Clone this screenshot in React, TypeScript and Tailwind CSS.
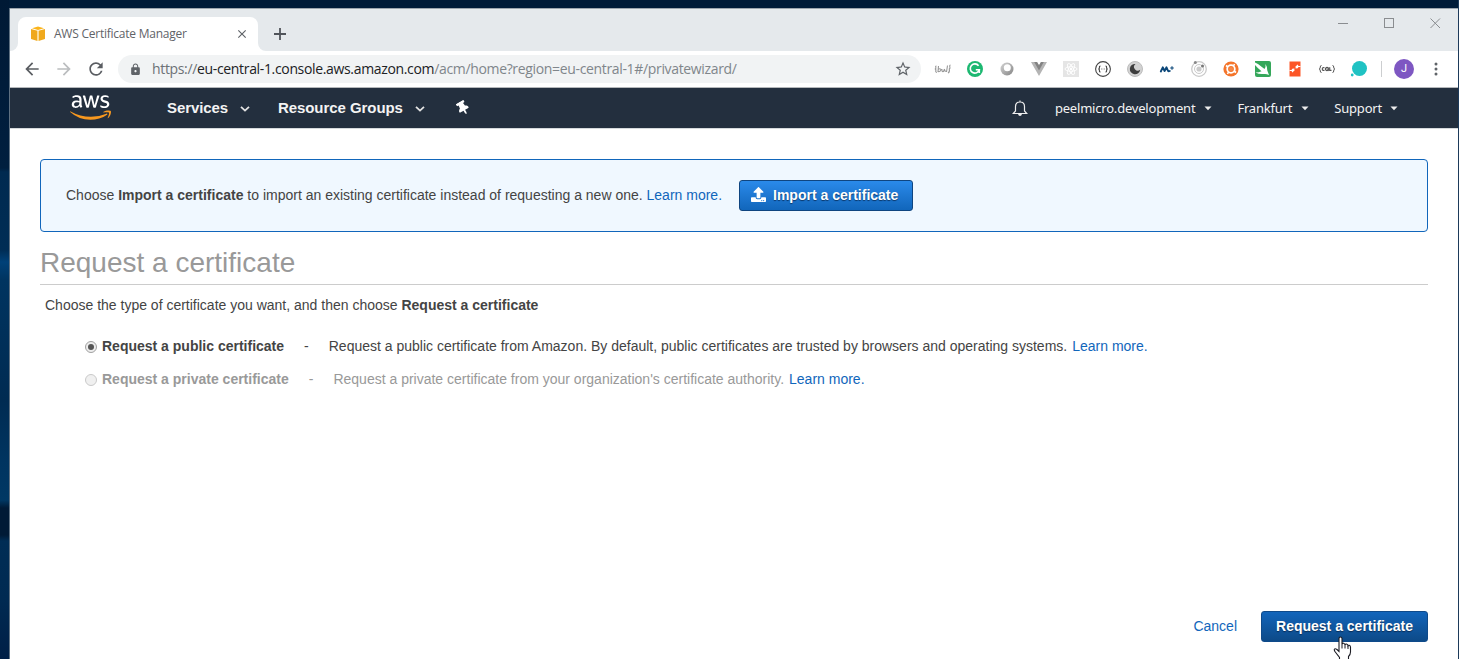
import React from "react";
import { MdArrowBack, MdArrowForward, MdRefresh, MdLock, MdStarBorder, MdClose } from "react-icons/md";
import { FaAws, FaThumbtack, FaUpload } from "react-icons/fa";

function Cube() {
  return (
    <svg viewBox="0 0 16 16" className="h-4 w-4">
      <path d="M8 0.5 14 2.2 8 4 2 2.2Z" fill="#fbb41a" />
      <path d="M1 3 7.500 4.800V15L1 13Z" fill="#f0a91d" />
      <path d="M15 3 8.500 4.800V15L15 13Z" fill="#f0a91d" />
      <path d="M7.500 4.800h1V15h-1Z" fill="#fde3a6" />
    </svg>
  );
}

function Extensions() {
  const cls = "h-4 w-4 overflow-visible";
  return (
    <div className="flex items-center gap-4">
      <svg viewBox="0 0 16 16" className={cls}>
        <g fill="none" stroke="#999" strokeWidth="1.100">
          <path d="M1.500 5Q0 5 1 7Q-.5 8 1 9Q0 11 2 11.500M15.500 4Q14.500 4 14.800 6Q15.500 7 14.300 8Q15 11 13 12" />
          <path d="M3.500 5 3 10.500Q5.500 11 6 8.500Q4.500 7 3.300 8.500M7 8Q6.500 11 8.500 10.500L9.500 8M12.500 4.500 11.500 11M9.500 8Q9.500 11 11.500 10" />
        </g>
      </svg>
      <svg viewBox="0 0 16 16" className={cls}>
        <circle cx="8" cy="8" r="8" fill="#1cb871" />
        <path d="M11.600 4.800A4.600 4.600 0 1 0 12.300 8.800H8.800M12.300 8.800V12" fill="none" stroke="#fff" strokeWidth="1.600" />
      </svg>
      <svg viewBox="0 0 16 16" className={cls}>
        <defs>
          <linearGradient id="ring" x1="0" y1="0" x2="1" y2="1">
            <stop offset="0" stopColor="#d4d4d4" />
            <stop offset="1" stopColor="#858585" />
          </linearGradient>
        </defs>
        <circle cx="8" cy="8" r="6.500" fill="url(#ring)" />
        <circle cx="8.300" cy="6.800" r="3.500" fill="#fff" />
      </svg>
      <svg viewBox="0 0 16 16" className={cls}>
        <path d="M0 1H6L8 4 10 1H16L8 15Z" fill="#b4b4b4" />
        <path d="M3.200 1H6L8 4.500 10 1H12.800L8 9.500Z" fill="#838383" />
      </svg>
      <svg viewBox="0 0 16 16" className={cls}>
        <rect width="16" height="16" fill="#e5e5e5" />
        <g fill="none" stroke="#fff" strokeWidth="0.900">
          <ellipse cx="8" cy="8" rx="6" ry="2.300" />
          <ellipse cx="8" cy="8" rx="6" ry="2.300" transform="rotate(60 8 8)" />
          <ellipse cx="8" cy="8" rx="6" ry="2.300" transform="rotate(120 8 8)" />
        </g>
        <circle cx="8" cy="8" r="1.300" fill="#fff" />
      </svg>
      <svg viewBox="0 0 16 16" className={cls}>
        <circle cx="8" cy="8" r="7.400" fill="#fff" stroke="#444" strokeWidth="1.100" />
        <path d="M5.500 5Q4.300 5 4.400 6.500Q4.500 8 3.300 8Q4.500 8 4.400 9.500Q4.300 11 5.500 11M10.500 5Q11.700 5 11.600 6.500Q11.500 8 12.700 8Q11.500 8 11.600 9.500Q11.700 11 10.500 11" fill="none" stroke="#444" strokeWidth="1.100" />
        <path d="M6.200 8h3.600" stroke="#777" strokeWidth="1" strokeDasharray="0.800 0.600" />
      </svg>
      <svg viewBox="0 0 16 16" className={cls}>
        <circle cx="8" cy="8" r="7.500" fill="#d2d2d2" stroke="#bdbdbd" />
        <path d="M8.500 2.900A5.200 5.200 0 1 0 13.200 8.800A3.700 3.700 0 0 1 8.500 2.900Z" fill="#3d3d3d" />
      </svg>
      <svg viewBox="0 0 16 16" className={cls}>
        <path d="M1.800 10.500 3.800 6.300 5.600 10 7.500 6.300 9 9.800Q9.500 10.700 10.800 10" fill="none" stroke="#0b4779" strokeWidth="1.900" strokeLinecap="round" strokeLinejoin="round" />
        <path d="M11.200 7h3.600M13 5.200v3.600" stroke="#0b4779" strokeWidth="1.100" />
      </svg>
      <svg viewBox="0 0 16 16" className={cls}>
        <g fill="none" stroke="#c9c9c9">
          <circle cx="8" cy="8" r="7.300" strokeWidth="1.300" />
          <circle cx="8" cy="8" r="4.500" strokeWidth="1" />
        </g>
        <circle cx="8" cy="8" r="2.600" fill="#cacaca" />
        <circle cx="4.300" cy="1.500" r="1.500" fill="#888" />
        <circle cx="11.500" cy="5" r="1.500" fill="#777" />
      </svg>
      <svg viewBox="0 0 16 16" className={cls}>
        <circle cx="8" cy="8" r="7.600" fill="#f4752b" />
        <circle cx="8" cy="8" r="3.800" fill="none" stroke="#fff" strokeWidth="1.800" />
        <path d="M3 4.500 5 6M11.500 3 10.500 5M13 11.500 11 10M4.500 13 5.500 11" stroke="#fff" strokeWidth="1.600" />
        <circle cx="8" cy="8" r="2" fill="#f58a4b" />
      </svg>
      <svg viewBox="0 0 16 16" className={cls}>
        <path d="M0 0H14Q16 0 16 2V14Q16 16 14 16H2Q0 16 0 14Z" fill="#35a75a" />
        <path d="M0 1.500 3 3 9.500 8Q11 6 10.500 3Q12.500 6 12.300 9.500L14 14Q11 12.500 9 13Q4 13.500 0.500 11.500Q4 11.500 6.500 10.300Q3 7.500 0 4Z" fill="#fff" />
      </svg>
      <svg viewBox="0 0 16 16" className={cls}>
        <path d="M2.500 0.500H13.500V15.500H2.500Z" fill="#fc5627" />
        <path d="M13.500 5.500H9.200V7.500M11 4 9.500 5.500 11 7M2.500 9.500H6.800V7.500M5 8 6.500 9.500 5 11" fill="none" stroke="#fff" strokeWidth="1.200" />
      </svg>
      <svg viewBox="0 0 16 16" className={cls}>
        <g fill="none" stroke="#555" strokeWidth="1">
          <path d="M2.500 4.500Q1.200 4.500 1.300 6Q1.300 8 .2 8Q1.300 8 1.300 10Q1.200 11.500 2.500 11.500M13.500 4.500Q14.800 4.500 14.700 6Q14.700 8 15.800 8Q14.700 8 14.700 10Q14.800 11.500 13.500 11.500" />
          <path d="M5.500 6.800Q3.300 6 3.300 8Q3.300 10 5.500 9.200M10.700 6.200V9.300H12.500M8.500 8.500 9.500 10" strokeWidth="1.200" />
          <circle cx="8" cy="8" r="1.500" strokeWidth="1.300" />
        </g>
      </svg>
      <svg viewBox="0 0 16 16" className={cls}>
        <circle cx="8.500" cy="7.500" r="7.500" fill="#20c2c3" />
        <circle cx="1.200" cy="14" r="1.400" fill="#20c2c3" />
      </svg>
    </div>
  );
}

function Caret() {
  return (
    <svg viewBox="0 0 8 5" className="h-[5px] w-2">
      <path d="M.5.5h7L4 4.200Z" fill="#eee" />
    </svg>
  );
}

function Chevron() {
  return (
    <svg viewBox="0 0 10 6" className="h-1.5 w-[10px]">
      <path d="M1 .8 5 4.600 9 .8" fill="none" stroke="#e3e3e3" strokeWidth="1.800" />
    </svg>
  );
}

function TabStrip() {
  return (
    <div className="flex h-[43px] border-t border-[#9da5ae] bg-[#e5e9ec]">
      <div className="flex w-2 items-end bg-white">
        <div className="h-[42px] w-2 rounded-br-lg bg-[#e5e9ec]" />
      </div>
      <div className="bg-[#e5e9ec] pt-2">
        <div className="flex h-[34px] w-[240px] items-center rounded-t-lg bg-white pl-3 pr-[9px]">
          <Cube />
          <span className="ml-2 flex-1 whitespace-nowrap font-['Open_Sans',sans-serif] text-[12px] tracking-[-0.24px] text-[#5f6368]">
            AWS Certificate Manager
          </span>
          <MdClose className="h-[14px] w-[14px] text-[#5f6368]" />
        </div>
      </div>
      <div className="flex w-2 items-end bg-white">
        <div className="h-[42px] w-2 rounded-bl-lg bg-[#e5e9ec]" />
      </div>
      <svg viewBox="0 0 12 12" className="ml-2 mt-[19px] h-3 w-3">
        <path d="M6 0v12M0 6h12" stroke="#50545a" strokeWidth="1.800" />
      </svg>
      <svg viewBox="0 0 104 12" className="ml-auto mr-[16px] mt-[8px] h-3 w-[104px]">
        <g fill="none" stroke="#8a8d90" strokeWidth="1">
          <path d="M0 6.500h10M92.500 1.500l9.500 9.500M102 1.500l-9.500 9.500" />
          <rect x="46.500" y="1.500" width="9" height="9" />
        </g>
      </svg>
    </div>
  );
}

function Toolbar() {
  return (
    <div className="flex h-[37px] items-center border-b border-[#b5b8bb] bg-white pl-3">
      <MdArrowBack className="h-5 w-5 text-[#5a5d62]" />
      <MdArrowForward className="ml-3 h-5 w-5 text-[#bbbdbf]" />
      <MdRefresh className="ml-3 h-5 w-5 text-[#5a5d62]" />
      <div className="ml-3 flex h-7 w-[803px] items-center rounded-full bg-[#f1f3f4] pl-[11px] pr-[9px]">
        <MdLock className="h-[13px] w-[13px] text-[#5f6368]" />
        <span className="mb-[2px] ml-[10px] whitespace-nowrap font-['Open_Sans',sans-serif] text-[14px] tracking-[-0.34px] text-[#80868b]">
          <span className="text-[#6c7176]">https://</span>
          <span className="text-[#202124]">eu-central-1.console.aws.amazon.com</span>
          /acm/home?region=eu-central-1#/privatewizard/
        </span>
        <MdStarBorder className="ml-auto h-[18px] w-[18px] text-[#5f6368]" />
      </div>
      <div className="ml-[14px]">
        <Extensions />
      </div>
      <div className="ml-[14px] h-4 w-px bg-[#ccced0]" />
      <div className="ml-3 flex h-5 w-5 items-center justify-center rounded-full bg-[#7e57c2] font-['Roboto',sans-serif] text-[11px] text-white">
        J
      </div>
      <svg viewBox="0 0 4 14" className="ml-5 h-[14px] w-1">
        <g fill="#5f6368">
          <circle cx="2" cy="2" r="1.500" />
          <circle cx="2" cy="7" r="1.500" />
          <circle cx="2" cy="12" r="1.500" />
        </g>
      </svg>
    </div>
  );
}

function NavBar() {
  return (
    <div className="flex h-[41px] items-center border-b border-[#d5d9dc] bg-[#232f3e] pl-[60px] text-[#f3f3f3]">
      <svg className="h-0 w-0">
        <defs>
          <linearGradient id="awsfill" x1="0" y1="0" x2="0" y2="1">
            <stop offset="0.62" stopColor="#fff" />
            <stop offset="0.62" stopColor="#f7981f" />
          </linearGradient>
        </defs>
      </svg>
      <FaAws className="mb-[2px] h-[33px] w-[41px] fill-[url(#awsfill)]" />
      <span className="ml-14 font-['Liberation_Sans',Arial,sans-serif] text-[15px] font-bold tracking-[-0.1px]">Services</span>
      <span className="ml-3 mt-[2px] flex">
        <Chevron />
      </span>
      <span className="ml-[28px] whitespace-nowrap font-['Liberation_Sans',Arial,sans-serif] text-[15px] font-bold tracking-[-0.06px]">Resource Groups</span>
      <span className="ml-3 mt-[2px] flex">
        <Chevron />
      </span>
      <FaThumbtack className="ml-[31px] h-[14px] w-[14px] -rotate-30 text-white" />
      <div className="ml-auto mr-[60px] flex items-center font-['Noto_Sans',sans-serif] text-[13px] tracking-[-0.2px]">
        <svg viewBox="0 0 16 18" className="mr-[27px] h-[18px] w-4">
          <path d="M8 1.500V3M3.500 12V7.500Q3.500 3 8 3T12.500 7.500V12L14.800 14.500H1.200Z" fill="none" stroke="#eee" strokeWidth="1.200" />
          <path d="M6 15h4Q9.500 17 8 17T6 15Z" fill="#eee" />
        </svg>
        <span className="mt-px">peelmicro.development</span>
        <span className="ml-[9px] mt-px flex"><Caret /></span>
        <span className="ml-[25px] mt-px">Frankfurt</span>
        <span className="ml-[9px] mt-px flex"><Caret /></span>
        <span className="ml-[25px] mt-px">Support</span>
        <span className="ml-2 mt-px flex"><Caret /></span>
      </div>
    </div>
  );
}

function Radio({ checked, disabled }: { checked?: boolean; disabled?: boolean }) {
  return (
    <svg viewBox="0 0 12 12" className="mt-[2px] h-3 w-3">
      <circle cx="6" cy="6" r="5.500" fill={disabled ? "#f0f0f0" : "#ededed"} stroke={disabled ? "#c9c9c9" : "#a0a0a0"} />
      {checked && <circle cx="6" cy="6" r="3" fill="#555" />}
    </svg>
  );
}

function HandCursor() {
  return (
    <svg viewBox="0 0 20 25" className="absolute left-[72px] top-[25px] h-[25px] w-5">
      <path
        d="M6 2.500Q6 1 7.500 1T9 2.500V8Q9.300 7 10.500 7.200T12 8.800Q12.300 7.800 13.500 8T15 9.700Q15.300 9 16.300 9.300T17.500 11V16Q17.500 18.500 15.500 20.500V24H6.500V21.500L2.300 16Q.8 13.800 1.500 13T4 13.500L6 15.500Z"
        fill="#fff"
        stroke="#1c1c24"
        strokeWidth="1.100"
      />
      <path d="M9 8v4.500M12 9v3.500M15 10v3" stroke="#1c1c24" strokeWidth="1" />
    </svg>
  );
}

export default function App() {
  return (
    <div className="flex h-[659px] w-[1459px] overflow-hidden bg-[#001b38]">
      <div className="w-[9px] shrink-0 bg-[linear-gradient(to_bottom,#001935_0,#001f3f_168px,#002a50_172px,#002d55_250px,#004178_262px,#003460_280px,#002b52_400px,#003460_460px,#003864_500px,#001a36_508px,#001a36_535px,#002d55_541px,#002a52_600px,#001f46_659px)]" />
      <div className="flex w-[1449px] flex-col pt-2">
        <div className="flex-1 border-l border-[#5f7182] bg-white">
          <TabStrip />
          <Toolbar />
          <NavBar />
          <main className="flex h-[530px] flex-col pl-[30px] pr-[30px] pt-[30px] font-['Liberation_Sans',Arial,sans-serif] text-[14px] text-[#444]">
            <section className="flex h-[73px] shrink-0 items-center rounded-[4px] border border-[#1166bb] bg-[#f0f8ff] pl-[25px]">
              <p className="whitespace-nowrap">
                Choose <b>Import a certificate</b> to import an existing certificate instead of requesting a new one.{" "}
                <a className="text-[#1166bb]">Learn more.</a>
              </p>
              <button className="ml-[17px] flex h-[31px] w-[174px] items-center rounded-[3px] border border-[#0f4580] bg-linear-to-b from-[#2a8aea] to-[#1166bb] pl-[11px] text-[14px] font-bold text-white [text-shadow:0_1px_1px_#0a3566]">
                <FaUpload className="mr-[7px] mb-[2px] h-[15px] w-[15px]" />
                Import a certificate
              </button>
            </section>
            <h1 className="mt-3 h-[41px] shrink-0 border-b border-[#ccc] text-[28px] leading-[37px] text-[#999]">Request a certificate</h1>
            <p className="ml-[5px] mt-[10px] leading-5">
              Choose the type of certificate you want, and then choose <b>Request a certificate</b>
            </p>
            <div className="ml-[45px] mt-[21px] flex h-5 items-center whitespace-nowrap">
              <Radio checked />
              <b className="ml-[5px]">Request a public certificate</b>
              <span className="ml-5">-</span>
              <span className="ml-5">
                Request a public certificate from Amazon. By default, public certificates are trusted by browsers and operating systems.
              </span>
              <a className="ml-[5px] text-[#1166bb]">Learn more.</a>
            </div>
            <div className="ml-[45px] mt-[13px] flex h-5 items-center whitespace-nowrap text-[#999]">
              <Radio disabled />
              <b className="ml-[5px]">Request a private certificate</b>
              <span className="ml-5">-</span>
              <span className="ml-5">Request a private certificate from your organization's certificate authority.</span>
              <a className="ml-[5px] text-[#1166bb]">Learn more.</a>
            </div>
            <div className="mb-[17px] mt-auto flex items-center justify-end">
              <a className="mr-6 text-[#1166bb]">Cancel</a>
              <div className="relative">
                <button className="h-[31px] w-[167px] rounded-[3px] border border-[#0f4a8a] bg-linear-to-b from-[#1265bb] to-[#0d4a88] text-[14px] font-bold text-white [text-shadow:0_1px_1px_#0a2c55]">
                  Request a certificate
                </button>
                <HandCursor />
              </div>
            </div>
          </main>
        </div>
      </div>
      <div className="w-px bg-[#1d3a5a]" />
    </div>
  );
}
